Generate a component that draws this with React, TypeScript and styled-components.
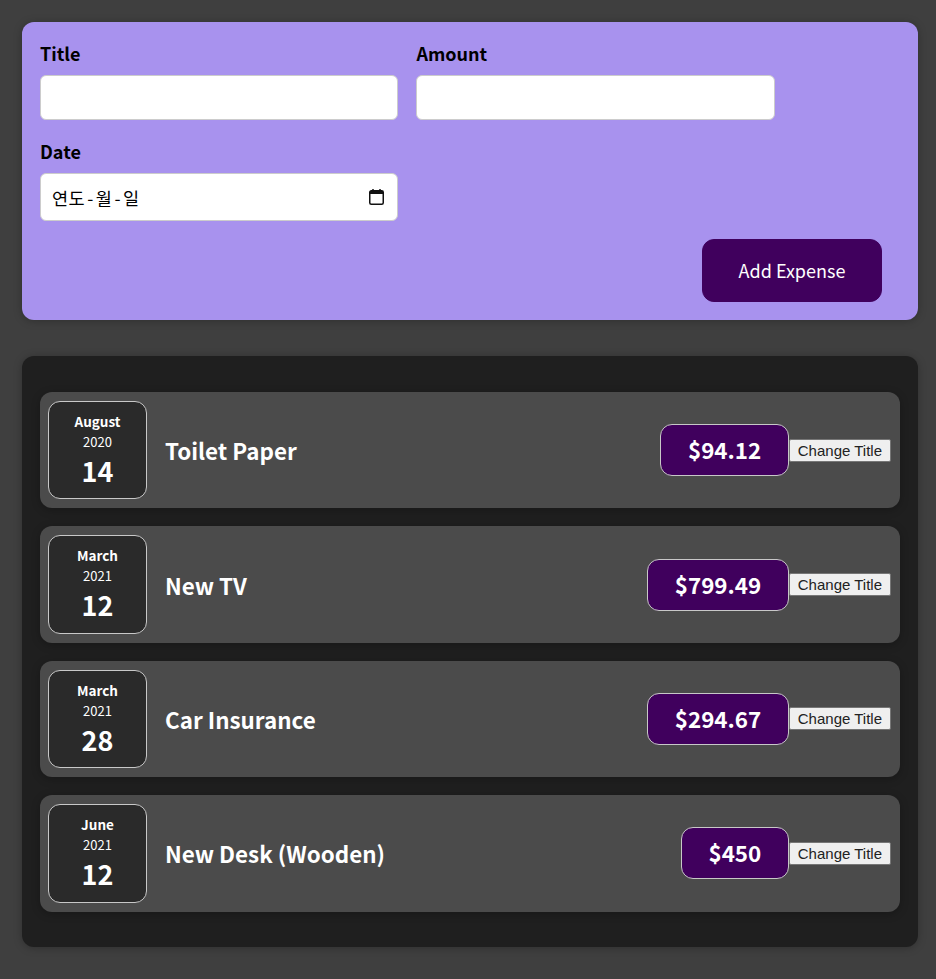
import React from "react";
import styled, { createGlobalStyle } from "styled-components";

const GlobalStyle = createGlobalStyle`
  html {
    font-family: "Noto Sans CJK KR", "Noto Sans", sans-serif;
    font-size: 18px;
  }
  * {
    box-sizing: border-box;
  }
  body {
    margin: 0;
    background: #3f3f3f;
  }
`;

const Page = styled.div`
  display: flex;
  flex-direction: column;
  gap: 36px;
  padding: 22px 18px 32px 22px;
`;

const FormPanel = styled.form`
  background: #a892ee;
  padding: 18px;
  border-radius: 12px;
  box-shadow: 0 1px 8px rgba(0, 0, 0, 0.25);
`;

const Controls = styled.div`
  display: flex;
  flex-wrap: wrap;
  gap: 18.2px 18px;
  margin-bottom: 18px;
`;

const Control = styled.div`
  width: 358.4px;
`;

const Label = styled.label`
  display: block;
  height: 26px;
  margin-bottom: 9px;
  font-size: 18px;
  line-height: 26px;
  font-weight: 700;
  color: #000;
`;

const Input = styled.input`
  display: block;
  width: 100%;
  height: 45px;
  padding: 9px;
  font: inherit;
  background: #fff;
  border: 1px solid #ccc;
  border-radius: 6px;
`;

const DateField = styled.div`
  display: flex;
  align-items: center;
  justify-content: space-between;
  height: 47.8px;
  padding: 0 13px 0 11px;
  font-size: 17.5px;
  letter-spacing: 0.5px;
  color: #000;
  background: #fff;
  border: 1px solid #ccc;
  border-radius: 6px;
`;

const Dash = styled.span`
  margin: 0 2px;
`;

const Actions = styled.div`
  display: flex;
  justify-content: flex-end;
`;

const AddButton = styled.button`
  width: 180px;
  height: 63px;
  margin-right: 18px;
  font: inherit;
  color: #fff;
  background: #40005d;
  border: 1px solid #40005d;
  border-radius: 12px;
  cursor: pointer;
`;

const ListPanel = styled.section`
  display: flex;
  flex-direction: column;
  gap: 18px;
  padding: 36px 18px 35px;
  background: #1f1f1f;
  border-radius: 12px;
  box-shadow: 0 1px 8px rgba(0, 0, 0, 0.25);
`;

const Item = styled.div`
  display: flex;
  align-items: center;
  height: 116.4px;
  padding: 9px 9px 9px 8px;
  background: #4b4b4b;
  border-radius: 12px;
  box-shadow: 0 2px 8px rgba(0, 0, 0, 0.25);
`;

const DateBox = styled.div`
  display: flex;
  flex-direction: column;
  align-items: center;
  flex: none;
  width: 99px;
  height: 98.4px;
  padding-top: 9px;
  color: #fff;
  background: #2a2a2a;
  border: 1px solid #c8c8c8;
  border-radius: 12px;
`;

const Month = styled.div`
  font-size: 13.5px;
  line-height: 21px;
  font-weight: 700;
`;

const Year = styled.div`
  font-size: 13px;
  line-height: 20px;
`;

const Day = styled.div`
  font-size: 27px;
  line-height: 38px;
  font-weight: 700;
`;

const ItemTitle = styled.h2`
  flex: 1;
  margin: 0 18px;
  font-size: 22.4px;
  font-weight: 700;
  color: #fff;
`;

const Price = styled.div`
  padding: 0 26.5px;
  height: 52px;
  font-size: 22.4px;
  line-height: 49px;
  font-weight: 700;
  color: #fff;
  background: #40005d;
  border: 1px solid #c8c8c8;
  border-radius: 12px;
`;

const ChangeButton = styled.button`
  padding: 2px 8px;
  font-family: "Liberation Sans", Arial, sans-serif;
  font-size: 15px;
  color: #222;
  background: #efefef;
  border: 1px solid #767676;
  border-radius: 2px;
`;

const expenses = [
  { title: "Toilet Paper", amount: "$94.12", month: "August", year: "2020", day: "14" },
  { title: "New TV", amount: "$799.49", month: "March", year: "2021", day: "12" },
  { title: "Car Insurance", amount: "$294.67", month: "March", year: "2021", day: "28" },
  { title: "New Desk (Wooden)", amount: "$450", month: "June", year: "2021", day: "12" },
];

const CalendarIcon = () => (
  <svg width="15" height="16" viewBox="0 0 15 16" fill="none">
    <path d="M4 0v2M11 0v2" stroke="#111" strokeWidth="1.5" />
    <rect x="0.75" y="1.75" width="13.5" height="13.5" rx="1.5" stroke="#111" strokeWidth="1.5" />
    <rect x="1" y="2" width="13" height="3" fill="#111" />
  </svg>
);

const App: React.FC = () => {
  return (
    <Page>
      <GlobalStyle />
      <FormPanel onSubmit={(e) => e.preventDefault()}>
        <Controls>
          <Control>
            <Label>Title</Label>
            <Input type="text" />
          </Control>
          <Control>
            <Label>Amount</Label>
            <Input type="text" />
          </Control>
          <Control>
            <Label>Date</Label>
            <DateField>
              <span>
                연도<Dash>-</Dash>월<Dash>-</Dash>일
              </span>
              <CalendarIcon />
            </DateField>
          </Control>
        </Controls>
        <Actions>
          <AddButton type="submit">Add Expense</AddButton>
        </Actions>
      </FormPanel>
      <ListPanel>
        {expenses.map((item) => (
          <Item key={item.title}>
            <DateBox>
              <Month>{item.month}</Month>
              <Year>{item.year}</Year>
              <Day>{item.day}</Day>
            </DateBox>
            <ItemTitle>{item.title}</ItemTitle>
            <Price>{item.amount}</Price>
            <ChangeButton type="button">Change Title</ChangeButton>
          </Item>
        ))}
      </ListPanel>
    </Page>
  );
};

export default App;
